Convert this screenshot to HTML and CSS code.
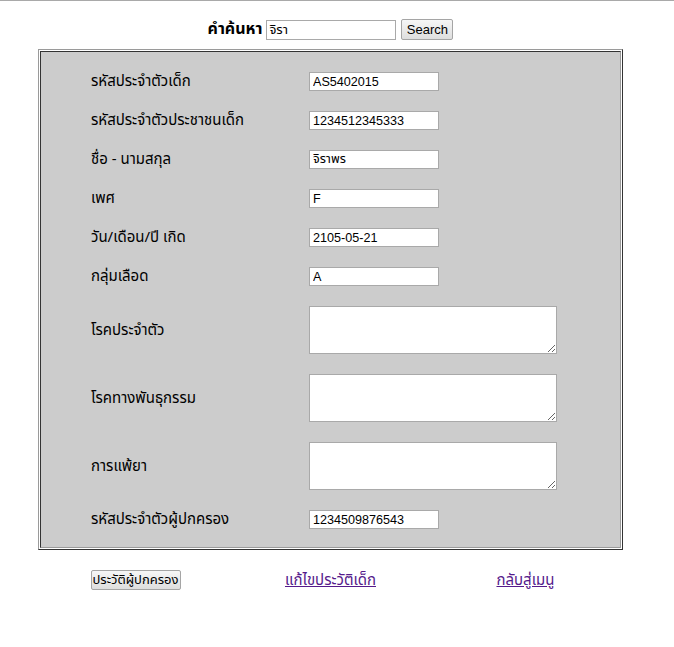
FILE: index.html
```html
<!DOCTYPE html>
<html lang="th">
<head>
<meta charset="utf-8">
<title>ประวัติเด็ก</title>
<link rel="stylesheet" href="styles.css">
</head>
<body>
<div class="topline"></div>
<div class="wrap">
  <form class="search">
    <label class="search-label" for="q">คำค้นหา</label>
    <input class="search-input" id="q" type="text" value="จิรา">
    <button class="btn search-btn" type="button">Search</button>
  </form>
  <div class="box-outer">
    <div class="box-inner">
      <div class="row"><span class="label">รหัสประจำตัวเด็ก</span><input class="field" type="text" value="AS5402015"></div>
      <div class="row"><span class="label">รหัสประจำตัวประชาชนเด็ก</span><input class="field" type="text" value="1234512345333"></div>
      <div class="row"><span class="label">ชื่อ - นามสกุล</span><input class="field" type="text" value="จิราพร"></div>
      <div class="row"><span class="label">เพศ</span><input class="field" type="text" value="F"></div>
      <div class="row"><span class="label">วัน/เดือน/ปี เกิด</span><input class="field" type="text" value="2105-05-21"></div>
      <div class="row"><span class="label">กลุ่มเลือด</span><input class="field" type="text" value="A"></div>
      <div class="row"><span class="label">โรคประจำตัว</span><textarea class="area"></textarea></div>
      <div class="row"><span class="label">โรคทางพันธุกรรม</span><textarea class="area"></textarea></div>
      <div class="row"><span class="label">การแพ้ยา</span><textarea class="area"></textarea></div>
      <div class="row"><span class="label">รหัสประจำตัวผู้ปกครอง</span><input class="field" type="text" value="1234509876543"></div>
    </div>
  </div>
  <div class="actions">
    <div class="cell"><button class="btn act-btn" type="button">ประวัติผู้ปกครอง</button></div>
    <div class="cell"><a class="link" href="#">แก้ไขประวัติเด็ก</a></div>
    <div class="cell"><a class="link" href="#">กลับสู่เมนู</a></div>
  </div>
</div>
</body>
</html>
```
FILE: styles.css
```css
html, body {
  margin: 0;
  padding: 0;
  background: #fff;
}
body {
  font-family: Tahoma, "Noto Sans Thai", "Noto Sans Thai UI", Loma, Garuda, "Liberation Sans", sans-serif;
  font-size: 15px;
  color: #000;
}
.topline {
  height: 1px;
  background: #a9a9a9;
}
.wrap {
  width: 585px;
  margin-left: 38px;
}
.search {
  display: flex;
  justify-content: center;
  align-items: center;
  margin: 18px 0 0;
  height: 21px;
}
.search-label {
  font-weight: bold;
  font-size: 16px;
  line-height: 21px;
  margin-right: 4px;
}
.search-input {
  box-sizing: border-box;
  width: 130px;
  height: 20px;
  border: 1px solid #a9a9a9;
  padding: 0 2px;
  font-family: inherit;
  font-size: 13px;
  margin: 0 5px 0 0;
}
.btn {
  box-sizing: border-box;
  height: 20px;
  padding: 0 3px;
  border: 1px solid #a5a5a5;
  border-radius: 2px;
  background: linear-gradient(#f6f6f6, #dedede);
  font-family: inherit;
  color: #000;
  margin: 0;
}
.search-btn {
  width: 52px;
  height: 21px;
  font-size: 13px;
  font-family: "Liberation Sans", Arial, sans-serif;
}
.act-btn {
  width: 90px;
  padding: 0;
  font-size: 13px;
  line-height: 18px;
  white-space: nowrap;
}
.box-outer {
  margin-top: 9px;
  border: 1px solid;
  border-color: #9a9a9a #333 #333 #9a9a9a;
  padding: 1px;
}
.box-inner {
  border: 1px solid;
  border-color: #333 #9a9a9a #9a9a9a #333;
  background: #ccc;
  padding: 10px 0 8px 50px;
}
.row {
  display: flex;
  align-items: center;
  padding: 10px 0;
}
.label {
  width: 218px;
  font-size: 15px;
  line-height: 19px;
}
.field {
  box-sizing: border-box;
  width: 130px;
  height: 19px;
  border: 1px solid #a9a9a9;
  padding: 0 3px;
  margin: 0;
  font-family: "Liberation Sans", Arial, "Noto Sans Thai", Loma, sans-serif;
  font-size: 12.6px;
  background: #fff;
}
.area {
  box-sizing: border-box;
  width: 248px;
  height: 48px;
  border: 1px solid #a9a9a9;
  margin: 0;
  padding: 2px;
  background: #fff;
}
.actions {
  display: grid;
  grid-template-columns: repeat(3, 1fr);
  margin-top: 20px;
}
.cell {
  display: flex;
  justify-content: center;
  align-items: center;
  height: 20px;
}
.link {
  color: #551a8b;
  text-decoration: underline;
  font-size: 15px;
  line-height: 19px;
}
```
